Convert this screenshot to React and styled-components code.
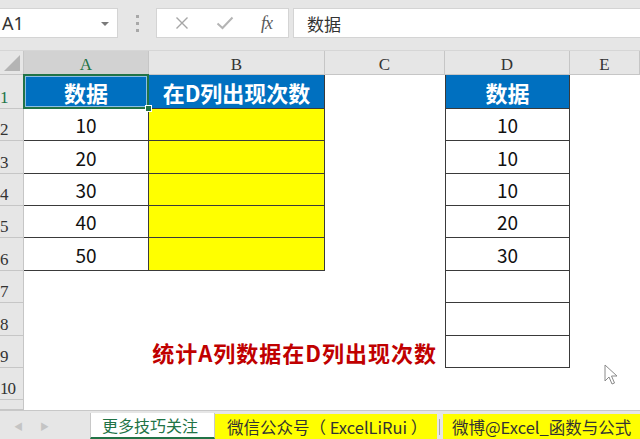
import React from 'react'
import styled, { createGlobalStyle } from 'styled-components'

const GlobalStyle = createGlobalStyle`
    html, body {
        margin: 0;
        padding: 0;
        background: #ffffff;
    }
    * {
        box-sizing: border-box;
    }
`

const CJK = '"Noto Sans CJK SC", "Noto Sans", sans-serif'
const GREEN = '#217346'
const LINE = '#3a3a3a'
const GRID = '#c6c6c6'

const COLS = ['A', 'B', 'C', 'D', 'E']
const ROW_HEIGHTS = [34, 32, 33, 32, 32, 33, 32, 33, 32, 32, 10]

const tableA = [10, 20, 30, 40, 50]
const tableD = [10, 10, 10, 20, 30, '', '', '']

function App() {
    const cells = []

    // header row
    cells.push(<Corner key="corner"><Triangle /></Corner>)
    COLS.forEach((c) => {
        cells.push(
            <ColHead key={'h' + c} $active={c === 'A'}>{c}</ColHead>
        )
    })

    ROW_HEIGHTS.forEach((h, i) => {
        const r = i + 1
        cells.push(
            <RowHead key={'r' + r} $active={r === 1}>{r <= 10 ? r : ''}</RowHead>
        )

        // column A
        if (r === 1) {
            cells.push(
                <Cell key={'A' + r} $bg="#0070c0" $color="#ffffff" $bold $size={22} $br $bb>
                    数据
                    <Selection><Handle /></Selection>
                </Cell>
            )
        } else if (r <= 6) {
            cells.push(<Cell key={'A' + r} $br $bb>{tableA[r - 2]}</Cell>)
        } else {
            cells.push(<Cell key={'A' + r} />)
        }

        // column B + C
        if (r === 1) {
            cells.push(<Cell key={'B' + r} $bg="#0070c0" $color="#ffffff" $bold $size={22} $br $bb>在D列出现次数</Cell>)
            cells.push(<Cell key={'C' + r} />)
        } else if (r <= 6) {
            cells.push(<Cell key={'B' + r} $bg="#ffff00" $br $bb />)
            cells.push(<Cell key={'C' + r} />)
        } else if (r === 9) {
            cells.push(<Note key="note">统计A列数据在D列出现次数</Note>)
        } else {
            cells.push(<Cell key={'B' + r} />)
            cells.push(<Cell key={'C' + r} />)
        }

        // column D
        if (r === 1) {
            cells.push(<Cell key={'D' + r} $bg="#0070c0" $color="#ffffff" $bold $size={22} $bl $br $bb>数据</Cell>)
        } else if (r <= 9) {
            cells.push(<Cell key={'D' + r} $bl $br $bb>{tableD[r - 2]}</Cell>)
        } else {
            cells.push(<Cell key={'D' + r} />)
        }

        // column E
        cells.push(<Cell key={'E' + r} />)
    })

    return (
        <Window>
            <GlobalStyle />
            <FormulaBar>
                <NameBox>
                    A1
                    <Caret />
                </NameBox>
                <Grip>
                    <span /><span /><span />
                </Grip>
                <FuncBox>
                    <svg width="14" height="14" viewBox="0 0 14 14">
                        <path d="M1.5 1.5 L12.5 12.5 M12.5 1.5 L1.5 12.5" stroke="#a6a6a6" strokeWidth="1.4" fill="none" />
                    </svg>
                    <svg width="18" height="14" viewBox="0 0 18 14">
                        <path d="M1.5 7.5 L6.5 12 L16.5 1.5" stroke="#b4b4b4" strokeWidth="2" fill="none" />
                    </svg>
                    <Fx>fx</Fx>
                </FuncBox>
                <Input>数据</Input>
            </FormulaBar>

            <Sheet>{cells}</Sheet>

            <TabBar>
                <TabNav>
                    <span>◀</span>
                    <span>▶</span>
                </TabNav>
                <Tab $active $width={125}>更多技巧关注</Tab>
                <Tab $yellow $width={222}>微信公众号（ ExcelLiRui ）</Tab>
                <TabSep />
                <Tab $yellow $grow>微博@Excel_函数与公式</Tab>
            </TabBar>

            <Pointer width="14" height="22" viewBox="0 0 14 22">
                <path d="M1 1 L1 17 L5 13 L8 20 L10.5 19 L7.5 12 L13 12 Z" fill="#ffffff" stroke="#8a8a8a" strokeWidth="1" strokeLinejoin="round" />
            </Pointer>
        </Window>
    )
}

export default App

const Window = styled.div`
    position: relative;
    width: 640px;
    height: 439px;
    overflow: hidden;
    display: flex;
    flex-direction: column;
    background: #ffffff;
    font-family: ${CJK};
`

const FormulaBar = styled.div`
    height: 51px;
    flex-shrink: 0;
    background: #e6e6e6;
    display: flex;
    align-items: flex-start;
    padding-top: 8px;
    border-bottom: 1px solid #d6d6d6;
`

const NameBox = styled.div`
    position: relative;
    width: 118px;
    height: 30px;
    background: #ffffff;
    border: 1px solid #d4d4d4;
    border-left: none;
    display: flex;
    align-items: center;
    padding-left: 2px;
    font-family: "Noto Sans", sans-serif;
    font-size: 18px;
    color: #333333;
`

const Caret = styled.span`
    position: absolute;
    right: 8px;
    top: 13px;
    width: 0;
    height: 0;
    border-left: 4px solid transparent;
    border-right: 4px solid transparent;
    border-top: 4px solid #7a7a7a;
`

const Grip = styled.div`
    width: 38px;
    height: 30px;
    display: flex;
    flex-direction: column;
    align-items: center;
    justify-content: center;
    gap: 4px;
    span {
        width: 3px;
        height: 3px;
        background: #a8a8a8;
    }
`

const FuncBox = styled.div`
    width: 133px;
    height: 30px;
    background: #ffffff;
    border: 1px solid #d4d4d4;
    display: flex;
    align-items: center;
    justify-content: space-between;
    padding: 0 16px 0 18px;
`

const Fx = styled.span`
    font-family: "Liberation Serif", serif;
    font-style: italic;
    font-size: 18px;
    color: #5a5a5a;
    letter-spacing: -1px;
`

const Input = styled.div`
    flex: 1;
    height: 30px;
    margin-left: 4px;
    background: #ffffff;
    border: 1px solid #d4d4d4;
    border-right: none;
    display: flex;
    align-items: center;
    padding-left: 13px;
    font-size: 17px;
    color: #333333;
`

const Sheet = styled.div`
    display: grid;
    grid-template-columns: 24px 125px 176px 120px 125px 1fr;
    grid-template-rows: 24px ${ROW_HEIGHTS.map((h) => h + 'px').join(' ')};
    flex-shrink: 0;
`

const Corner = styled.div`
    position: relative;
    background: #e6e6e6;
    border-right: 1px solid ${GRID};
    border-bottom: 1px solid ${GRID};
`

const Triangle = styled.div`
    position: absolute;
    right: 3px;
    bottom: 3px;
    width: 0;
    height: 0;
    border-left: 16px solid transparent;
    border-bottom: 16px solid #b4b4b4;
`

const ColHead = styled.div`
    background: ${({ $active }) => ($active ? '#d2d2d2' : '#e6e6e6')};
    border-right: 1px solid ${GRID};
    border-bottom: 1px solid ${({ $active }) => ($active ? GREEN : GRID)};
    display: flex;
    align-items: flex-end;
    justify-content: center;
    padding-bottom: 1px;
    font-family: "Liberation Serif", serif;
    font-size: 17px;
    line-height: 1;
    color: ${({ $active }) => ($active ? GREEN : '#333333')};
`

const RowHead = styled.div`
    background: #e6e6e6;
    border-right: 1px solid ${GRID};
    border-bottom: 1px solid ${GRID};
    display: flex;
    align-items: flex-end;
    padding: 0 0 2px 0;
    font-family: "Liberation Serif", serif;
    font-size: 17px;
    line-height: 1;
    color: ${({ $active }) => ($active ? GREEN : '#333333')};
    letter-spacing: -1px;
`

const Cell = styled.div`
    position: relative;
    background: ${({ $bg }) => $bg || '#ffffff'};
    color: ${({ $color }) => $color || '#111111'};
    font-weight: ${({ $bold }) => ($bold ? 700 : 400)};
    font-size: ${({ $size }) => $size || 19}px;
    display: flex;
    align-items: center;
    justify-content: center;
    line-height: 1;
    white-space: nowrap;
    border-left: ${({ $bl }) => ($bl ? `1px solid ${LINE}` : 'none')};
    border-right: ${({ $br }) => ($br ? `1px solid ${LINE}` : 'none')};
    border-bottom: ${({ $bb }) => ($bb ? `1px solid ${LINE}` : 'none')};
`

const Selection = styled.div`
    position: absolute;
    left: -1px;
    top: -1px;
    right: -1px;
    bottom: -1px;
    z-index: 2;
    border: 2px solid ${GREEN};
    box-shadow: inset 0 0 0 1px rgba(255, 255, 255, 0.55);
    pointer-events: none;
`

const Handle = styled.div`
    position: absolute;
    right: -5px;
    bottom: -5px;
    width: 7px;
    height: 7px;
    background: ${GREEN};
    border: 1px solid #ffffff;
`

const Note = styled.div`
    grid-column: span 2;
    display: flex;
    align-items: center;
    justify-content: flex-end;
    padding-right: 8px;
    color: #c00000;
    font-weight: 700;
    font-size: 22px;
    white-space: nowrap;
    letter-spacing: 1px;
`

const TabBar = styled.div`
    flex: 1;
    display: flex;
    align-items: stretch;
    background: #e6e6e6;
    border-top: 1px solid #c8c8c8;
    padding-top: 2px;
    font-size: 16px;
`

const TabNav = styled.div`
    width: 90px;
    flex-shrink: 0;
    display: flex;
    align-items: center;
    gap: 17px;
    padding-left: 14px;
    font-size: 9px;
    color: #c4c4c4;
`

const Tab = styled.div`
    width: ${({ $width }) => ($width ? $width + 'px' : 'auto')};
    flex: ${({ $grow }) => ($grow ? '1 1 0' : 'none')};
    min-width: 0;
    overflow: hidden;
    padding: 0 ${({ $active, $grow }) => ($active ? '11px' : $grow ? '9px' : '12px')};
    display: flex;
    align-items: center;
    white-space: nowrap;
    background: ${({ $active, $yellow }) => ($active ? '#ffffff' : $yellow ? '#ffff00' : 'transparent')};
    color: ${({ $active }) => ($active ? GREEN : '#333333')};
    border-bottom: ${({ $active }) => ($active ? `2px solid ${GREEN}` : 'none')};
    border-left: ${({ $active }) => ($active ? '1px solid #c8c8c8' : 'none')};
    border-right: ${({ $active }) => ($active ? '1px solid #c8c8c8' : 'none')};
    margin-top: ${({ $yellow }) => ($yellow ? '1px' : '0')};
    font-size: ${({ $active }) => ($active ? '16px' : '16.5px')};
`

const TabSep = styled.div`
    width: 4px;
    flex-shrink: 0;
    border-left: 1px solid #a8a8a8;
    margin: 6px 0 4px 2px;
`

const Pointer = styled.svg`
    position: absolute;
    left: 604px;
    top: 364px;
`
